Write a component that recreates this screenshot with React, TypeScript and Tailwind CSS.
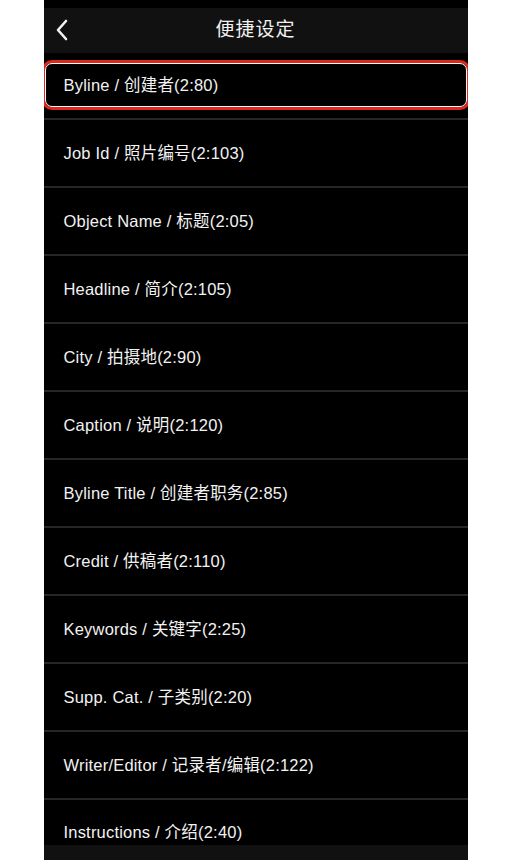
const FONT = "font-['Liberation_Sans','Noto_Sans_CJK_SC',sans-serif]";

const rows = [
  "Job Id / 照片编号(2:103)",
  "Object Name / 标题(2:05)",
  "Headline / 简介(2:105)",
  "City / 拍摄地(2:90)",
  "Caption / 说明(2:120)",
  "Byline Title / 创建者职务(2:85)",
  "Credit / 供稿者(2:110)",
  "Keywords / 关键字(2:25)",
  "Supp. Cat. / 子类别(2:20)",
  "Writer/Editor / 记录者/编辑(2:122)",
];

function BackIcon() {
  return (
    <svg width="14" height="22" viewBox="0 0 14 22" fill="none">
      <path d="M11 2 L3 11 L11 20" stroke="#f2f2f2" strokeWidth="2.6" strokeLinecap="round" strokeLinejoin="round" />
    </svg>
  );
}

export default function App() {
  return (
    <div className={`flex min-h-screen w-full justify-center bg-white ${FONT}`}>
      <div className="flex h-[860px] w-[424px] flex-col overflow-hidden bg-black">
        {/* Header */}
        <div className="h-[8px] bg-black" />
        <div className="relative flex h-[45px] items-center justify-center bg-[#111111]">
          <span className="absolute left-[11px] top-[11px]">
            <BackIcon />
          </span>
          <h1 className="text-[19px] tracking-[1px] text-[#f2f2f2]">便捷设定</h1>
        </div>

        {/* Selected row */}
        <div className="border-b-2 border-[#262626] pb-[8px] pt-[7px]">
          <div className="-mx-[2px] h-[50px] rounded-[10px] border-[3px] border-[#e3261c]">
            <div className="flex h-full items-center rounded-[7px] border-[1.5px] border-white bg-black pl-[18px]">
              <span className="text-[16.5px] tracking-[0.2px] text-[#f2f2f2]">Byline / 创建者(2:80)</span>
            </div>
          </div>
        </div>

        {/* List */}
        {rows.map((r) => (
          <div key={r} className="flex h-[68px] shrink-0 items-center border-b-2 border-[#262626] pl-[20px]">
            <span className="text-[16.5px] tracking-[0.2px] text-[#f2f2f2]">{r}</span>
          </div>
        ))}
        <div className="h-[45px] shrink-0 pl-[20px] pt-[21px]">
          <span className="text-[16.5px] leading-[20px] tracking-[0.2px] text-[#f2f2f2]">Instructions / 介绍(2:40)</span>
        </div>
        <div className="flex-1 bg-[#111111]" />
      </div>
    </div>
  );
}
